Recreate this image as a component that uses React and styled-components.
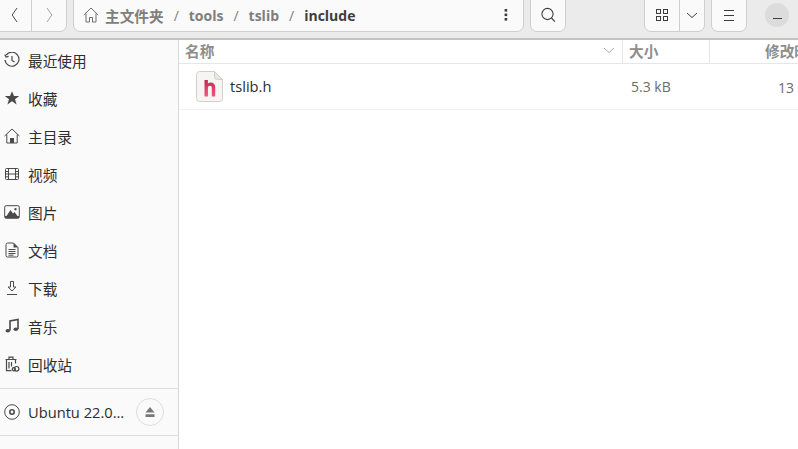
import React from 'react'
import styled, { createGlobalStyle } from 'styled-components'

const Global = createGlobalStyle`
    html, body {
        margin: 0;
        padding: 0;
        width: 798px;
        height: 449px;
        overflow: hidden;
        background: #fff;
    }
    * { box-sizing: border-box; }
`

const FONT = `"Open Sans", "Noto Sans CJK SC", sans-serif`

const Window = styled.div`
    width: 798px;
    height: 449px;
    display: flex;
    flex-direction: column;
    overflow: hidden;
    font-family: ${FONT};
    color: #3d3d3d;
`

const Toolbar = styled.header`
    flex: none;
    height: 40px;
    display: flex;
    background: #ebebeb;
    border-bottom: 2px solid #c4c3c1;
`

const Group = styled.div`
    height: 40px;
    margin: -8px 0 0 ${(p) => p.$ml || 0}px;
    display: flex;
    background: #fafafa;
    border: 1px solid #cfcecc;
    border-radius: 7px;
    overflow: hidden;
    flex: none;
`

const Btn = styled.div`
    width: ${(p) => p.$w}px;
    display: flex;
    align-items: center;
    justify-content: center;
    padding-top: 6px;
    flex: none;
    & + & {
        border-left: 1px solid #cfcecc;
    }
`

const PathBar = styled.div`
    width: 414px;
    display: flex;
    align-items: center;
    padding: 6px 0 0 9px;
    font-size: 14px;
    font-weight: 700;
    color: #807e7c;
`

const Crumb = styled.span`
    color: ${(p) => (p.$current ? '#3d3d3d' : '#807e7c')};
    margin-left: ${(p) => p.$ml || 0}px;
    font-size: ${(p) => (p.$cjk ? '14.67px' : '14px')};
    white-space: nowrap;
`

const Slash = styled.span`
    font-weight: 400;
    color: #807e7c;
    margin: 0 10px;
`

const MinCircle = styled.div`
    width: 24px;
    height: 24px;
    margin: 3px 0 0 18px;
    flex: none;
    border-radius: 50%;
    background: #dcdcdc;
    display: flex;
    align-items: center;
    justify-content: center;
    padding-top: 6px;
`

const Body = styled.div`
    flex: 1;
    display: flex;
    min-height: 0;
`

const Sidebar = styled.nav`
    flex: none;
    width: 179px;
    background: #fafafa;
    border-right: 1px solid #d8d8d6;
    padding-top: 1px;
`

const Place = styled.div`
    height: 38px;
    display: flex;
    align-items: center;
    padding-left: 4px;
    font-size: 14.67px;
    color: #2e2e2e;
`

const PlaceIcon = styled.span`
    width: 16px;
    height: 16px;
    margin-right: 8px;
    display: flex;
    flex: none;
    color: #4a4a4a;
`

const Divider = styled.div`
    height: 1px;
    background: #dcdcda;
    margin-top: ${(p) => p.$mt || 0}px;
`

const Mount = styled(Place)`
    height: 46px;
    position: relative;
    white-space: nowrap;
`

const Eject = styled.div`
    position: absolute;
    left: 136px;
    top: 9px;
    width: 28px;
    height: 28px;
    border-radius: 50%;
    border: 1px solid #dedddb;
    display: flex;
    align-items: center;
    justify-content: center;
`

const Main = styled.main`
    flex: 1;
    min-width: 0;
    background: #fff;
`

const ColumnHead = styled.div`
    height: 24px;
    display: flex;
    border-bottom: 1px solid #e6e6e4;
    font-size: 14.67px;
    font-weight: 700;
    color: #8f8d8b;
`

const Col = styled.div`
    width: ${(p) => p.$w}px;
    flex: none;
    display: flex;
    align-items: center;
    justify-content: space-between;
    padding: 0 7px 2px ${(p) => p.$pl}px;
    white-space: nowrap;
    overflow: hidden;
    & + & {
        border-left: 1px solid #e6e6e4;
    }
`

const FileRow = styled.div`
    height: 46px;
    display: flex;
    align-items: center;
    border-bottom: 1px solid #f1f1f0;
    font-size: 14.67px;
`

const FileName = styled.div`
    width: 443px;
    flex: none;
    display: flex;
    align-items: center;
    padding-left: 17px;
    color: #2e2e2e;
    gap: 7px;
`

const FileLabel = styled.span`
    margin-bottom: 2px;
`

const FileSize = styled.div`
    width: 156px;
    flex: none;
    padding-left: 9px;
    font-size: 14px;
    color: #6e6a66;
`

const FileDate = styled.div`
    flex: none;
    margin-top: 2px;
    font-size: 14px;
    color: #6e6a66;
`

const Icon = ({ children, size = 16, vb = 16, stroke = 'currentColor', sw = 1 }) => (
    <svg width={size} height={size} viewBox={`0 0 ${vb} ${vb}`} fill="none" stroke={stroke} strokeWidth={sw}>
        {children}
    </svg>
)

const HomeGlyph = ({ color = '#4a4a4a' }) => (
    <Icon stroke={color}>
        <path d="M.8 8 8 1l7.2 7M3 6.5V15h3.5v-4.5h3V15H13V6.5" />
    </Icon>
)

const places = [
    ['最近使用', (
        <Icon>
            <path d="M2.2 3.2A7 7 0 1 1 1 8" strokeWidth="1.2" />
            <path d="M.8 2.4 2 5l2.6-.6M8 4v4.4l2.6 1.6" strokeWidth="1.2" />
        </Icon>
    )],
    ['收藏', (
        <Icon>
            <path fill="currentColor" stroke="none" d="M8 1.2 10 6h5.2l-4.2 3.2 1.6 5.2L8 11.3l-4.6 3.1L5 9.2.8 6H6z" />
        </Icon>
    )],
    ['主目录', (
        <Icon>
            <path d="M.6 8 8 1l7.4 7M2.8 6.4V15h10.4V6.4" />
            <path fill="currentColor" stroke="none" d="M6 10h4v5H6z" />
        </Icon>
    )],
    ['视频', (
        <Icon>
            <rect x="1.5" y="2.5" width="13" height="11" rx="1" />
            <path d="M4.5 2.5v11M11.5 2.5v11M4.5 8h7M1.5 5.5h3M1.5 8h3M1.5 10.8h3M11.5 5.5h3M11.5 8h3M11.5 10.8h3" />
        </Icon>
    )],
    ['图片', (
        <Icon>
            <rect x=".7" y="1.7" width="14.6" height="12.6" rx="1.5" />
            <path fill="currentColor" stroke="none" d="M2.5 12h11L10.5 8 9 9.5 6.5 6zM11.5 4a1.2 1.2 0 1 0 .01 0z" />
            <path fill="currentColor" stroke="none" d="M1 12h14v2H1z" />
        </Icon>
    )],
    ['文档', (
        <Icon>
            <path d="M3.5 1h6L14 5.5V13.5a1.5 1.5 0 0 1-1.5 1.5h-9A1.5 1.5 0 0 1 2 13.5v-11A1.5 1.5 0 0 1 3.5 1z" />
            <path fill="currentColor" stroke="none" d="M9.5 1v4.5H14z" />
            <path d="M4.5 7.5h7M4.5 9.5h7M4.5 11.5h7M4.5 13.2h5" />
        </Icon>
    )],
    ['下载', (
        <Icon>
            <path d="M6.5 1.5h3V7h2.4L8 11 4.1 7h2.4zM3 14.5h10" />
        </Icon>
    )],
    ['音乐', (
        <Icon sw={1.6}>
            <path d="M6 12.5V3l8-1.5V11" />
            <ellipse cx="3.8" cy="12.7" rx="2.3" ry="1.8" fill="currentColor" stroke="none" />
            <ellipse cx="11.8" cy="11.3" rx="2.3" ry="1.8" fill="currentColor" stroke="none" />
        </Icon>
    )],
    ['回收站', (
        <Icon sw={1.2}>
            <path d="M1.5 3.5h11M5 3V1.2h4V3M2.5 3.5v11.2h5M11.5 3.5v4M5 6v6.5M7.5 6v4.5" />
            <circle cx="12.6" cy="12.8" r="2.3" />
            <circle cx="9.8" cy="13.2" r="1.6" />
        </Icon>
    )],
]

export default function App() {
    return (
        <Window>
            <Global />
            <Toolbar>
                <Group $ml={-20}>
                    <Btn $w={50}>
                        <svg width="16" height="16" viewBox="0 0 16 16" fill="none" stroke="#4a4a4a" style={{ marginLeft: 17 }}>
                            <path d="M10 1 5.2 8l4.8 7" />
                        </svg>
                    </Btn>
                    <Btn $w={35}>
                        <Icon stroke="#a5a4a2">
                            <path d="M6 1l4.8 7L6 15" />
                        </Icon>
                    </Btn>
                </Group>
                <Group $ml={6}>
                    <PathBar>
                        <HomeGlyph color="#6e6e6e" />
                        <Crumb $ml={6} $cjk>主文件夹</Crumb>
                        <Slash>/</Slash>
                        <Crumb>tools</Crumb>
                        <Slash>/</Slash>
                        <Crumb>tslib</Crumb>
                        <Slash>/</Slash>
                        <Crumb $current>include</Crumb>
                    </PathBar>
                    <Btn $w={35}>
                        <svg width="4" height="12" viewBox="0 0 4 12" fill="#3d3d3d">
                            <rect x=".6" y="0" width="2.6" height="2.6" />
                            <rect x=".6" y="4.5" width="2.6" height="2.6" />
                            <rect x=".6" y="9" width="2.6" height="2.6" />
                        </svg>
                    </Btn>
                </Group>
                <Group $ml={6}>
                    <Btn $w={34}>
                        <Icon stroke="#3d3d3d" sw={1.1}>
                            <circle cx="7.5" cy="7" r="5.6" />
                            <path d="M11.5 11l3.4 3.6" />
                        </Icon>
                    </Btn>
                </Group>
                <Group $ml={78}>
                    <Btn $w={34}>
                        <Icon stroke="#3d3d3d">
                            <rect x="2.5" y="2.5" width="4" height="4" />
                            <rect x="9.5" y="2.5" width="4" height="4" />
                            <rect x="2.5" y="9.5" width="4" height="4" />
                            <rect x="9.5" y="9.5" width="4" height="4" />
                        </Icon>
                    </Btn>
                    <Btn $w={25}>
                        <Icon stroke="#3d3d3d">
                            <path d="M3 6l5 4.5L13 6" />
                        </Icon>
                    </Btn>
                </Group>
                <Group $ml={6}>
                    <Btn $w={34}>
                        <Icon stroke="#3d3d3d">
                            <path d="M3 3.5h10M3 8.5h10M3 13.5h10" />
                        </Icon>
                    </Btn>
                </Group>
                <MinCircle>
                    <svg width="9" height="1" viewBox="0 0 9 1">
                        <rect width="9" height="1" fill="#3d3d3d" />
                    </svg>
                </MinCircle>
            </Toolbar>
            <Body>
                <Sidebar>
                    {places.map(([label, glyph]) => (
                        <Place key={label}>
                            <PlaceIcon>{glyph}</PlaceIcon>
                            {label}
                        </Place>
                    ))}
                    <Divider $mt={5} />
                    <Mount>
                        <PlaceIcon>
                            <Icon>
                                <circle cx="8" cy="8" r="7.3" />
                                <circle cx="8" cy="8" r="2.2" strokeWidth="1.6" />
                            </Icon>
                        </PlaceIcon>
                        Ubuntu 22.0…
                        <Eject>
                            <svg width="10" height="10" viewBox="0 0 10 10" fill="#777">
                                <path d="M5 0l4.5 5.5h-9zM.5 7.3h9V10h-9z" />
                            </svg>
                        </Eject>
                    </Mount>
                    <Divider />
                </Sidebar>
                <Main>
                    <ColumnHead>
                        <Col $w={443} $pl={6}>
                            名称
                            <svg width="12" height="7" viewBox="0 0 12 7" fill="none" stroke="#a8a8a6">
                                <path d="M1 1l5 4.5L11 1" />
                            </svg>
                        </Col>
                        <Col $w={87} $pl={6}>大小</Col>
                        <Col $w={90} $pl={55}>修改时间</Col>
                    </ColumnHead>
                    <FileRow>
                        <FileName>
                            <svg width="27" height="31" viewBox="0 0 27 31">
                                <defs>
                                    <linearGradient id="hfade" x1="0" y1="0" x2="0" y2="1">
                                        <stop offset="0" stopColor="#c9284c" />
                                        <stop offset="1" stopColor="#f0587e" />
                                    </linearGradient>
                                </defs>
                                <path d="M3.5.5h15l8 8v19a3 3 0 0 1-3 3h-20a3 3 0 0 1-3-3v-24a3 3 0 0 1 3-3z" fill="#f6f5f4" stroke="#d0cfcd" />
                                <path d="M18.5.5v5a3 3 0 0 0 3 3h5z" fill="#e8e7e5" stroke="#d0cfcd" />
                                <path d="M8.5 9v16.5h3.4v-9c0-1 .8-1.7 2-1.7s1.9.7 1.9 1.7v9h3.4v-9.5c0-3-2-4.5-4.6-4.5-1 0-2 .4-2.7 1V9z" fill="url(#hfade)" />
                            </svg>
                            <FileLabel>tslib.h</FileLabel>
                        </FileName>
                        <FileSize>5.3 kB</FileSize>
                        <FileDate>13</FileDate>
                    </FileRow>
                </Main>
            </Body>
        </Window>
    )
}
